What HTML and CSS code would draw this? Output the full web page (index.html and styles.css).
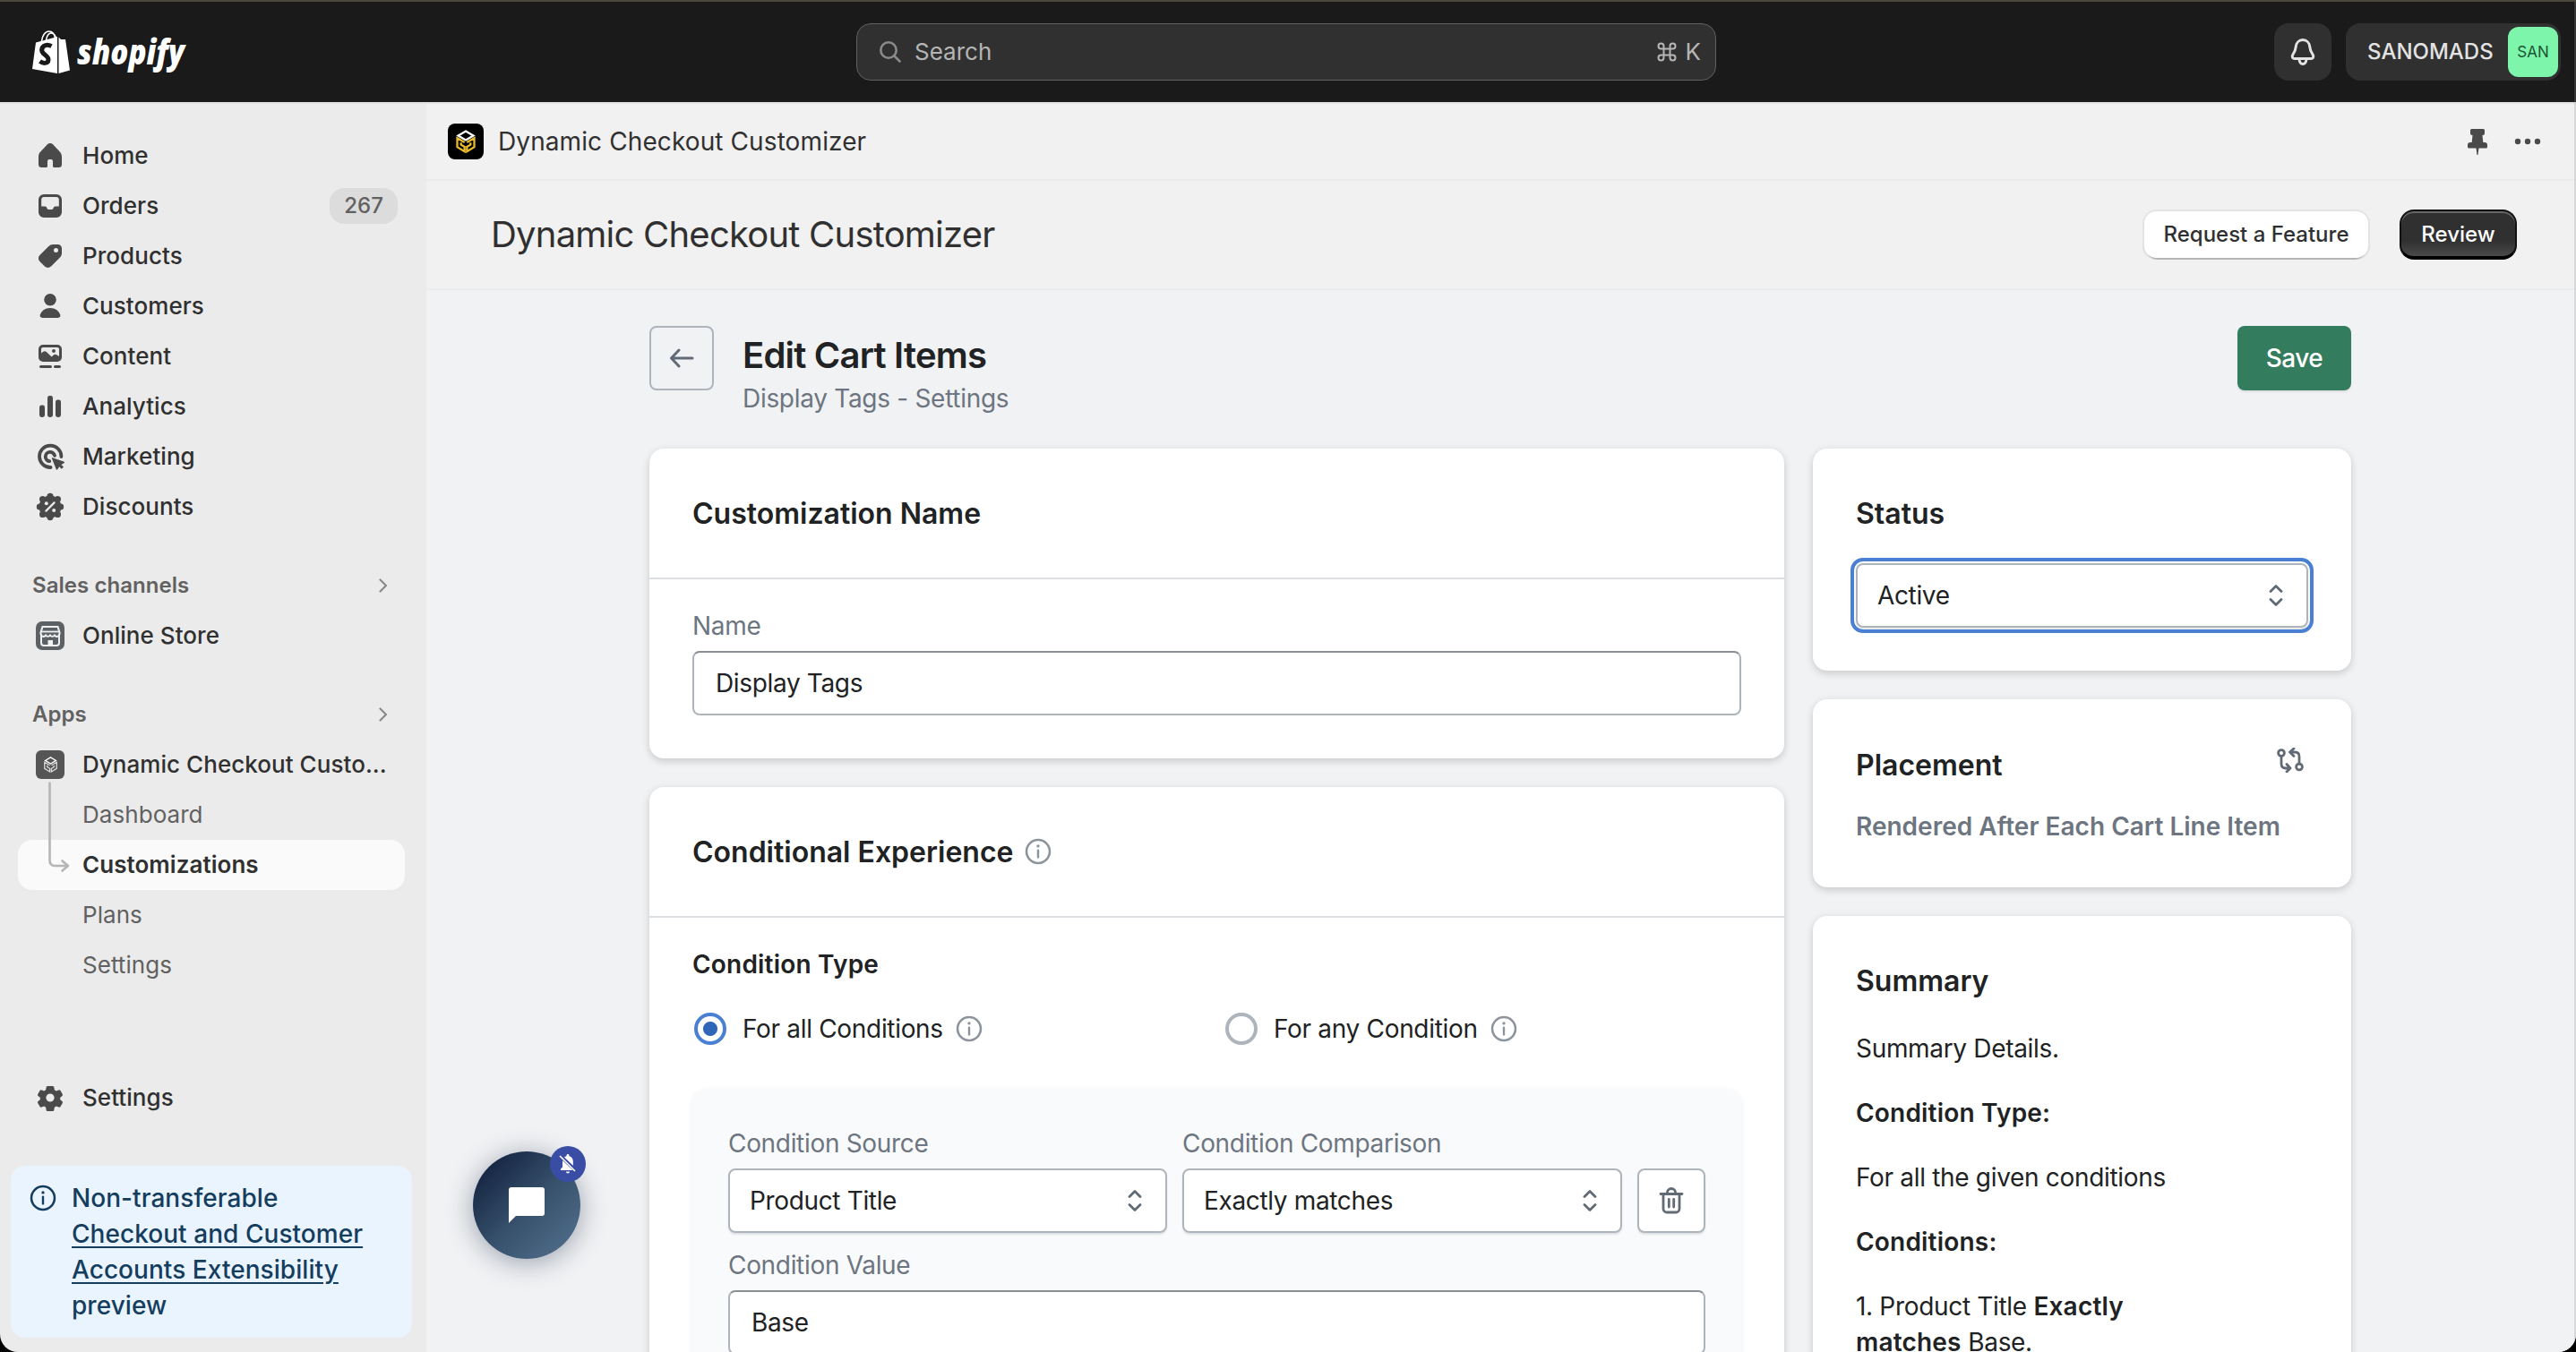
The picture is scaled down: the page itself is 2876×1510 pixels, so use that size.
FILE: index.html
```html
<!DOCTYPE html>
<html lang="en">
<head>
    <meta charset="UTF-8">
    <meta name="viewport" content="width=device-width, initial-scale=1.0">
    <title>Dynamic Checkout Customizer</title>
    <link rel="stylesheet" href="styles.css">
</head>
<body>

<!-- shared icons -->
<svg class="defs" width="0" height="0">
    <symbol id="info" viewBox="0 0 20 20">
        <circle cx="10" cy="10" r="8.1" fill="none" stroke="currentColor" stroke-width="1.6"/>
        <path d="M10 9.2v4.8" fill="none" stroke="currentColor" stroke-width="1.5" stroke-linecap="round"/>
        <circle cx="10" cy="6.2" r="1.05" fill="currentColor"/>
    </symbol>
    <symbol id="updown" viewBox="0 0 16 26">
        <path d="M2 8.5 8 2.5l6 6M2 17.5l6 6 6-6" fill="none" stroke="currentColor" stroke-width="2.8" stroke-linecap="round" stroke-linejoin="round"/>
    </symbol>
    <symbol id="chevron" viewBox="0 0 10 16">
        <path d="M1.5 1.5 8 8l-6.500 6.500" fill="none" stroke="currentColor" stroke-width="2.2" stroke-linecap="round" stroke-linejoin="round"/>
    </symbol>
    <symbol id="cube" viewBox="0 0 24 28">
        <path class="cube-top" d="M12 2.500 20.500 7.500 12 12.500 3.500 7.500Z" fill="none"/>
        <path class="cube-side" d="M10.700 15 2.500 10.200v10l8.200 5V20l-4-2.300v-2.500M13.300 15l8.200-4.800v10l-8.200 5V20l4-2.300v-2.500" fill="none"/>
    </symbol>
</svg>

<div class="frame">
    <header class="topbar">
        <div class="logo">
            <svg width="42" height="50" viewBox="0 0 42 50">
                <path d="M10.500 13C11 7 14.500 2 18.500 2S25 5 25.500 10M15.500 12C16 7 18.500 3.500 21.500 4S26 7 26.500 10" fill="none" stroke="#fff" stroke-width="1.6"/>
                <path d="M4 14.500 28 8v41L0 44Z" fill="#fff"/>
                <path d="M29.500 8.500 32 11h5l5 34.500L29.500 49Z" fill="#fff"/>
                <path d="M21.500 18.500C14.500 15 9.500 19.500 11 24.500c1.500 4 7.500 5 7 9.500-.5 4.500-6 4-9.500 1.500" fill="none" stroke="#1a1a1a" stroke-width="5"/>
            </svg>
            <svg width="126" height="58" viewBox="0 0 126 58">
                <text x="2" y="43" class="wordmark" textLength="120" lengthAdjust="spacingAndGlyphs">shopify</text>
            </svg>
        </div>
        <div class="search">
            <svg width="26" height="26" viewBox="0 0 26 26" fill="none" stroke="#8a8a8a" stroke-width="2.6" stroke-linecap="round"><circle cx="11" cy="11" r="8.7"/><path d="m17.500 17.500 6 6"/></svg>
            <span>Search</span>
            <span class="shortcut"><svg width="22" height="22" viewBox="0 0 22 22" fill="none" stroke="#b5b5b5" stroke-width="2"><path d="M7.500 7.500h7v7h-7zM7.500 7.500H4.500a3 3 0 1 1 3-3zM14.500 7.500V4.500a3 3 0 1 1 3 3zM14.500 14.500H17.500a3 3 0 1 1-3 3zM7.500 14.500v3a3 3 0 1 1-3-3z"/></svg>K</span>
        </div>
        <button class="bell">
            <svg width="40" height="40" viewBox="0 0 20 20" fill="none" stroke="#e3e3e3" stroke-width="1.5" stroke-linejoin="round"><path d="M10 3.300c-2.300 0-3.700 1.800-3.900 3.900-.2 2.100-.5 2.700-1.500 4-.9 1.200-.5 2.600.9 2.600h9c1.400 0 1.800-1.400.9-2.600-1-1.300-1.300-1.900-1.500-4-.2-2.100-1.600-3.900-3.900-3.900Z"/><path d="M8 14c.1 1.600.9 2.700 2 2.700s1.900-1.100 2-2.700"/></svg>
        </button>
        <div class="account">
            <span>SANOMADS</span>
            <div class="avatar">SAN</div>
        </div>
    </header>

    <div class="layout">
        <aside class="sidebar">
            <nav class="menu">
                <a href="#">
                    <svg viewBox="0 0 20 20"><path d="M8.344 3.692a2.250 2.250 0 0 1 3.312 0l3.854 4.190a3.750 3.750 0 0 1 .99 2.538v4.330a1.750 1.750 0 0 1-1.750 1.750h-2.500a.75.75 0 0 1-.75-.75v-2.750a1 1 0 0 0-1-1h-1a1 1 0 0 0-1 1v2.750a.75.75 0 0 1-.75.75h-2.500a1.750 1.750 0 0 1-1.750-1.750v-4.330c0-.94.353-1.846.99-2.539l3.854-4.189Z"/></svg>
                    Home
                </a>
                <a href="#">
                    <svg viewBox="0 0 20 20"><path fill-rule="evenodd" d="M6.500 3.500h7a3 3 0 0 1 3 3v7a3 3 0 0 1-3 3h-7a3 3 0 0 1-3-3v-7a3 3 0 0 1 3-3ZM6.700 5A1.600 1.600 0 0 0 5.100 6.600V10.200h1.900c.5 0 .8.200 1 .6l.3.600c.2.400.5.600 1 .6h1.400c.5 0 .8-.2 1-.6l.3-.6c.2-.4.5-.6 1-.6h1.900V6.600A1.600 1.600 0 0 0 13.300 5Z"/></svg>
                    Orders
                    <span class="count">267</span>
                </a>
                <a href="#">
                    <svg viewBox="0 0 20 20"><path fill-rule="evenodd" d="M11.600 3.500h2.650a2.250 2.250 0 0 1 2.250 2.250V8.400c0 .9-.36 1.770-1 2.400l-5 5a2.500 2.500 0 0 1-3.530 0l-2.770-2.770a2.500 2.500 0 0 1 0-3.530l5-5a3.400 3.400 0 0 1 2.400-1ZM13.250 8a1.250 1.250 0 1 0 0-2.500 1.250 1.250 0 0 0 0 2.500Z"/></svg>
                    Products
                </a>
                <a href="#">
                    <svg viewBox="0 0 20 20"><circle cx="10" cy="6.4" r="3.4"/><path d="M10 11c-2.800 0-4.800 1.500-5.600 3.800-.3.900.3 1.700 1.200 1.700h8.800c.9 0 1.500-.8 1.200-1.700C14.800 12.500 12.800 11 10 11Z"/></svg>
                    Customers
                </a>
                <a href="#">
                    <svg viewBox="0 0 20 20"><path fill-rule="evenodd" d="M6 3.500h8a2.500 2.500 0 0 1 2.500 2.500v4.500a2.500 2.500 0 0 1-2.500 2.500H6a2.500 2.500 0 0 1-2.500-2.500V6A2.500 2.500 0 0 1 6 3.500ZM6 5a1 1 0 0 0-1 1v2.300l1-.8c.6-.5 1.300-.5 1.900 0l2.900 2.800 1.100-1c.6-.5 1.300-.5 1.900 0L15 10V6a1 1 0 0 0-1-1ZM12 8a1 1 0 1 0 0-2 1 1 0 0 0 0 2Z"/><path d="M4.750 15.750h5.500M12.750 15.750h2.500" stroke="#4a4a4a" stroke-width="1.5" stroke-linecap="round"/></svg>
                    Content
                </a>
                <a href="#">
                    <svg viewBox="0 0 20 20"><rect x="4" y="9.3" width="3" height="6.7" rx="1.2"/><rect x="8.5" y="4" width="3" height="12" rx="1.2"/><rect x="13" y="6.3" width="3" height="9.7" rx="1.2"/></svg>
                    Analytics
                </a>
                <a href="#">
                    <svg viewBox="0 0 20 20"><path d="M10.300 16a6.100 6.100 0 1 1 5.900-6" fill="none" stroke="#4a4a4a" stroke-width="1.9" stroke-linecap="round"/><path d="M9.600 12.600A2.600 2.600 0 1 1 12.500 9.400" fill="none" stroke="#4a4a4a" stroke-width="1.9" stroke-linecap="round"/><path d="m11 10.500 6.600 2.200c.5.200.5.700.1.900l-1.500.9 1.300 1.300-1.100 1.100-1.300-1.300-.9 1.400c-.3.500-.8.400-.9-.1l-2.400-6Z"/></svg>
                    Marketing
                </a>
                <a href="#">
                    <svg viewBox="0 0 20 20"><circle cx="10" cy="10" r="6.2"/><circle cx="10" cy="4.2" r="1.8"/><circle cx="14.2" cy="5.8" r="1.8"/><circle cx="15.8" cy="10" r="1.8"/><circle cx="14.2" cy="14.2" r="1.8"/><circle cx="10" cy="15.8" r="1.8"/><circle cx="5.8" cy="14.2" r="1.8"/><circle cx="4.2" cy="10" r="1.8"/><circle cx="5.8" cy="5.8" r="1.8"/><path d="m7.700 12.300 4.600-4.600" stroke="#ebebeb" stroke-width="1.1" stroke-linecap="round"/><circle cx="7.9" cy="8.1" r="1" fill="#ebebeb"/><circle cx="12.1" cy="12" r="1" fill="#ebebeb"/></svg>
                    Discounts
                </a>
            </nav>

            <div class="section">Sales channels <svg width="10" height="16"><use href="#chevron"/></svg></div>
            <nav class="menu">
                <a href="#">
                    <svg viewBox="0 0 40 40"><rect x="4" y="4" width="32" height="32" rx="7" fill="#5c6166"/><path d="M10 18v10a3 3 0 0 0 3 3h14a3 3 0 0 0 3-3V18" fill="none" stroke="#f1f1f1" stroke-width="2"/><path d="M11.500 10h17l2 6.500v1.500a3 3 0 0 1-5.500 1.500 3 3 0 0 1-5 0 3 3 0 0 1-5 0A3 3 0 0 1 9.500 18v-1.500Z" fill="none" stroke="#f1f1f1" stroke-width="2"/><path d="M10 15.500h20" stroke="#f1f1f1" stroke-width="1.8"/><path d="M17.500 30v-5h5.500v5Z" fill="#f1f1f1"/></svg>
                    Online Store
                </a>
            </nav>

            <div class="section">Apps <svg width="10" height="16"><use href="#chevron"/></svg></div>
            <nav class="menu">
                <a href="#"><span class="app-tile"><svg width="17" height="20"><use href="#cube"/></svg></span><span class="app-name">Dynamic Checkout Custo...</span></a>
                <div class="submenu">
                    <svg class="branch" width="24" height="102" viewBox="0 0 24 102" fill="none" stroke="#b5b5b5" stroke-width="2.6" stroke-linecap="round" stroke-linejoin="round"><path d="M1.500 1.500V88q0 6 6 6H22M15.500 88.500l6.500 5.500-6.500 5.500"/></svg>
                    <a href="#">Dashboard</a>
                    <a href="#" class="active">Customizations</a>
                    <a href="#">Plans</a>
                    <a href="#">Settings</a>
                </div>
            </nav>

            <nav class="menu settings">
                <a href="#">
                    <svg viewBox="0 0 20 20"><path fill-rule="evenodd" d="M8.700 3.500h2.600c.5 0 .8.300.9.800l.2 1.300 1 .6 1.300-.5c.4-.2.900 0 1.100.4l1 1.800c.3.400.2.900-.2 1.200l-1 .8v1.200l1 .8c.4.300.5.800.2 1.200l-1 1.800c-.2.400-.7.600-1.100.4l-1.300-.5-1 .6-.2 1.300c-.1.500-.4.800-.9.800H8.700c-.5 0-.8-.3-.9-.8l-.2-1.300-1-.6-1.300.5c-.4.200-.9 0-1.100-.4l-1-1.800c-.3-.4-.2-.9.2-1.200l1-.8V9.900l-1-.8c-.4-.3-.5-.8-.2-1.200l1-1.800c.2-.4.700-.6 1.100-.4l1.300.5 1-.6.200-1.300c.1-.5.4-.8.900-.8ZM10 12.300a2.300 2.300 0 1 0 0-4.600 2.300 2.300 0 0 0 0 4.600Z"/></svg>
                    Settings
                </a>
            </nav>

            <div class="notice">
                <svg width="32" height="32"><use href="#info"/></svg>
                <p>Non-transferable<br><a href="#">Checkout and Customer<br>Accounts Extensibility</a><br>preview</p>
            </div>
        </aside>

        <main class="main">
            <div class="app-bar">
                <span class="app-icon"><svg width="24" height="28"><use href="#cube"/></svg></span>
                <span class="app-label">Dynamic Checkout Customizer</span>
                <svg class="pin" width="24" height="30" viewBox="0 0 24 30" fill="#4a4a4a"><path d="M5.500 0h13a1.500 1.500 0 0 1 1.500 1.500V5a2 2 0 0 1-2 2h-.5l.8 8H20a3 3 0 0 1 3 3v2a1.500 1.500 0 0 1-1.500 1.500h-8L12.500 29h-1l-1-7.500h-8A1.500 1.500 0 0 1 1 20v-2a3 3 0 0 1 3-3h1.700l.8-8H6a2 2 0 0 1-2-2V1.500A1.500 1.500 0 0 1 5.500 0Z"/></svg>
                <svg width="30" height="8" viewBox="0 0 30 8" fill="#4a4a4a"><circle cx="4" cy="4" r="3.2"/><circle cx="15" cy="4" r="3.2"/><circle cx="26" cy="4" r="3.2"/></svg>
            </div>

            <div class="title-bar">
                <h1>Dynamic Checkout Customizer</h1>
                <button class="btn btn-light">Request a Feature</button>
                <button class="btn btn-dark">Review</button>
            </div>

            <div class="page">
                <div class="page-header">
                    <button class="back">
                        <svg width="28" height="24" viewBox="0 0 28 24" fill="none" stroke="#616a75" stroke-width="3" stroke-linecap="round" stroke-linejoin="round"><path d="M26 12H3M11 3 2.500 12l8.500 9"/></svg>
                    </button>
                    <div class="page-title">
                        <h2>Edit Cart Items</h2>
                        <p>Display Tags - Settings</p>
                    </div>
                    <button class="save">Save</button>
                </div>

                <div class="columns">
                    <div class="column">
                        <section class="card">
                            <div class="card-header"><h3>Customization Name</h3></div>
                            <div class="card-body">
                                <label for="name">Name</label>
                                <input type="text" id="name" value="Display Tags">
                            </div>
                        </section>

                        <section class="card">
                            <div class="card-header">
                                <h3>Conditional Experience</h3>
                                <svg class="info" width="32" height="32"><use href="#info"/></svg>
                            </div>
                            <div class="card-body conditions">
                                <h4>Condition Type</h4>
                                <div class="radios">
                                    <label><input type="radio" name="type" checked>For all Conditions <svg class="info" width="32" height="32"><use href="#info"/></svg></label>
                                    <label><input type="radio" name="type">For any Condition <svg class="info" width="32" height="32"><use href="#info"/></svg></label>
                                </div>

                                <div class="condition">
                                    <div class="condition-row">
                                        <div class="field">
                                            <label for="source">Condition Source</label>
                                            <div class="select">
                                                <select id="source"><option>Product Title</option></select>
                                                <svg width="16" height="26"><use href="#updown"/></svg>
                                            </div>
                                        </div>
                                        <div class="field">
                                            <label for="comparison">Condition Comparison</label>
                                            <div class="select">
                                                <select id="comparison"><option>Exactly matches</option></select>
                                                <svg width="16" height="26"><use href="#updown"/></svg>
                                            </div>
                                        </div>
                                        <button class="trash">
                                            <svg width="28" height="30" viewBox="0 0 28 30" fill="none" stroke="#616a75" stroke-width="2.8" stroke-linecap="round"><path d="M2 7.500h24M9.500 7V5.500a4.500 4 0 0 1 9 0V7M5 8v16a4 4 0 0 0 4 4h10a4 4 0 0 0 4-4V8M11.300 13.500v8.500M16.700 13.500v8.500"/></svg>
                                        </button>
                                    </div>
                                    <label for="value">Condition Value</label>
                                    <input type="text" id="value" value="Base">
                                </div>
                            </div>
                        </section>
                    </div>

                    <div class="column">
                        <section class="card side status">
                            <h3>Status</h3>
                            <div class="select focused">
                                <select><option>Active</option></select>
                                <svg width="16" height="26"><use href="#updown"/></svg>
                            </div>
                        </section>

                        <section class="card side placement">
                            <div class="side-title">
                                <h3>Placement</h3>
                                <svg width="30" height="28" viewBox="0 0 30 28" fill="none" stroke="#616a75" stroke-width="2.8" stroke-linecap="round" stroke-linejoin="round"><circle cx="5" cy="6" r="3.4"/><path d="M5 9.500V18q0 5 5 5h4M11 18.500l4 4.500-4 4M25 18V10q0-5-5-5h-4M19 1l-4.500 4L19 9.500"/><circle cx="25" cy="21.5" r="3.4"/></svg>
                            </div>
                            <p>Rendered After Each Cart Line Item</p>
                        </section>

                        <section class="card side summary">
                            <h3>Summary</h3>
                            <p>Summary Details.</p>
                            <p><b>Condition Type:</b></p>
                            <p>For all the given conditions</p>
                            <p><b>Conditions:</b></p>
                            <p>1. Product Title <b>Exactly<br>matches</b> Base.</p>
                        </section>
                    </div>
                </div>
            </div>
        </main>
    </div>

    <button class="chat">
        <svg width="40" height="40" viewBox="0 0 40 40" fill="#fff"><path d="M3 0h34a3 3 0 0 1 3 3v26a3 3 0 0 1-3 3H8l-8 8V3a3 3 0 0 1 3-3Z"/></svg>
        <span class="muted">
            <svg width="20" height="22" viewBox="0 0 20 22" fill="#fff"><path d="M10 0c.9 0 1.500.7 1.500 1.500v.7c2.700.7 4.300 3 4.300 5.900V14l2 2.500V18H2v-1.500l2-2V8c0-2.900 1.800-5.200 4.500-5.800v-.7C8.500.7 9.100 0 10 0ZM8 19.500h4a2 2 0 0 1-4 0Z"/><path d="m1 1.500 18 17" stroke="#3a4da5" stroke-width="4"/><path d="m1 2 17 17" stroke="#fff" stroke-width="1.6"/></svg>
        </span>
    </button>
</div>

</body>
</html>
```
FILE: styles.css
```css
* {
    box-sizing: border-box;
}

html {
    background: #000;
}

body {
    margin: 0;
    height: 1510px;
    overflow: hidden;
    font-family: Inter, "Liberation Sans", sans-serif;
    font-size: 28px;
    line-height: 40px;
    color: #202223;
}

h1, h2, h3, h4, p {
    margin: 0;
}

a {
    color: inherit;
    text-decoration: none;
}

button {
    padding: 0;
    border: 0;
    font-family: inherit;
    cursor: pointer;
}

.defs {
    display: none;
}

.frame {
    position: relative;
    display: flex;
    flex-direction: column;
    height: 1510px;
    border-top: 2px solid #4a473c;
    border-radius: 0 0 20px 20px;
    overflow: hidden;
    background: #ebebeb;
}

/* thin window edge */
.frame::after {
    content: "";
    position: absolute;
    top: 0;
    right: 0;
    bottom: 0;
    width: 2px;
    background: rgba(140, 140, 140, 0.25);
}

/* top bar */
.topbar {
    display: flex;
    align-items: center;
    flex: none;
    height: 112px;
    padding: 0 17px 0 36px;
    background: #1a1a1a;
    color: #e3e3e3;
    font-size: 26px;
}

.logo {
    display: flex;
    align-items: center;
    gap: 6px;
    width: 920px;
}

.wordmark {
    font-family: "Open Sans", sans-serif;
    font-size: 38px;
    font-weight: 800;
    font-style: italic;
    fill: #fff;
}

.search {
    display: flex;
    align-items: center;
    width: 960px;
    height: 64px;
    padding: 0 16px 0 24px;
    border: 1px solid #616161;
    border-radius: 16px;
    background: #303030;
    color: #b5b5b5;
}

.search > svg {
    margin-right: 14px;
}

.shortcut {
    display: flex;
    align-items: center;
    gap: 10px;
    margin-left: auto;
}

.bell {
    display: flex;
    align-items: center;
    justify-content: center;
    width: 64px;
    height: 64px;
    margin-left: auto;
    margin-right: 16px;
    border-radius: 16px;
    background: #303030;
}

.account {
    display: flex;
    align-items: center;
    justify-content: space-between;
    width: 240px;
    height: 64px;
    padding: 0 3px 0 24px;
    border-radius: 16px;
    background: #303030;
    font-size: 24px;
    font-weight: 500;
}

.avatar {
    width: 56px;
    height: 56px;
    border-radius: 12px;
    background: #7df5aa;
    color: #1c5636;
    font-size: 17px;
    font-weight: 400;
    line-height: 56px;
    text-align: center;
}

.layout {
    display: flex;
    flex: 1;
    min-height: 0;
}

/* sidebar */
.sidebar {
    display: flex;
    flex-direction: column;
    flex: none;
    width: 476px;
    padding: 30px 16px 16px 12px;
    border-top: 2px solid #e3e3e3;
    font-size: 26px;
    font-weight: 500;
    letter-spacing: 0.05px;
    color: #303030;
}

.menu {
    padding: 0 8px;
}

.menu a {
    display: flex;
    align-items: center;
    height: 56px;
    padding: 0 8px 0 16px;
}

.menu a > svg {
    width: 40px;
    height: 40px;
    margin-right: 16px;
    fill: #4a4a4a;
}

.count {
    margin-left: auto;
    padding: 0 16px;
    border-radius: 16px;
    background: #dcdcdc;
    color: #616161;
    font-size: 24px;
}

.section {
    display: flex;
    align-items: center;
    justify-content: space-between;
    height: 56px;
    margin-top: 32px;
    padding: 0 27px 0 24px;
    color: #616161;
    font-size: 24px;
    font-weight: 600;
}

.section svg {
    color: #8a8a8a;
}

.app-tile {
    display: flex;
    align-items: center;
    justify-content: center;
    flex: none;
    width: 32px;
    height: 32px;
    margin: 0 20px 0 4px;
    border-radius: 6px;
    background: #555;
    stroke: #ddd;
    stroke-width: 1.8px;
}

.app-name {
    white-space: nowrap;
}

.submenu {
    position: relative;
}

.submenu a {
    padding-left: 72px;
    color: #616161;
    font-weight: 400;
}

.submenu a.active {
    border-radius: 16px;
    background: #fafafa;
    color: #303030;
    font-weight: 600;
}

.branch {
    position: absolute;
    left: 34px;
    top: -9px;
}

.menu.settings {
    margin-top: auto;
    margin-bottom: 48px;
}

.notice {
    display: flex;
    gap: 16px;
    height: 192px;
    padding: 16px 20px;
    border-radius: 16px;
    background: #eaf4ff;
    color: #143d5e;
    font-size: 28px;
}

.notice svg {
    flex: none;
    margin-top: 4px;
}

.notice a {
    text-decoration: underline;
    text-decoration-thickness: 2px;
    text-underline-offset: 4px;
}

/* main area */
.main {
    flex: 1;
    background: #f1f2f4;
}

.app-bar {
    display: flex;
    align-items: center;
    height: 88px;
    padding: 2px 39px 2px 24px;
    border-top: 2px solid #e3e3e3;
    border-bottom: 2px solid #ebebeb;
    background: #f1f1f1;
    color: #303030;
}

.app-icon {
    display: flex;
    align-items: center;
    justify-content: center;
    width: 40px;
    height: 40px;
    margin-right: 16px;
    border-radius: 8px;
    background: #000;
    stroke: #e9bc2f;
    stroke-width: 2.3px;
}

.app-label {
    letter-spacing: 0.1px;
}

.cube-top {
    stroke: #fff;
}

.pin {
    margin-top: 2px;
    margin-left: auto;
    margin-right: 29px;
}

.title-bar {
    display: flex;
    align-items: center;
    height: 122px;
    padding: 0 66px 0 72px;
    border-bottom: 2px solid #ebebeb;
    background: #f1f1f1;
}

.title-bar h1 {
    margin-right: auto;
    color: #303030;
    font-size: 40px;
    font-weight: 400;
    letter-spacing: -0.78px;
}

.btn {
    height: 56px;
    border-radius: 16px;
    font-size: 24px;
    font-weight: 500;
}

.btn-light {
    width: 254px;
    margin-right: 33px;
    padding-bottom: 2px;
    background: #fff;
    box-shadow: inset 0 2px 0 #e3e3e3, inset 2px 0 0 #e3e3e3, inset -2px 0 0 #e3e3e3, inset 0 -2px 0 #b5b5b5;
    color: #303030;
}

.btn-dark {
    width: 131px;
    border: 2px solid #111;
    border-bottom: 4px solid #000;
    background: linear-gradient(#303030 65%, #4a4a4a);
    box-shadow: inset 0 2px 0 #666;
    color: #fff;
}

.page {
    width: 1900px;
    margin-left: 249px;
    padding-top: 40px;
}

.page-header {
    display: flex;
    align-items: flex-start;
    height: 137px;
}

.back {
    width: 72px;
    height: 72px;
    border: 2px solid #aeb4bb;
    border-radius: 8px;
    background: none;
}

.back svg, .trash svg {
    display: block;
    margin: auto;
}

.page-title {
    margin-left: 32px;
    margin-right: auto;
    padding-top: 5px;
}

.page-title h2 {
    font-size: 40px;
    font-weight: 600;
    line-height: 56px;
    letter-spacing: -0.8px;
}

.page-title p {
    color: #6d7580;
    letter-spacing: -0.3px;
}

.save {
    width: 127px;
    height: 72px;
    border-radius: 8px;
    background: #347c5e;
    box-shadow: 0 2px 2px rgba(0, 0, 0, 0.08);
    color: #fff;
    font-size: 28px;
    font-weight: 500;
    letter-spacing: -0.5px;
}

.columns {
    display: grid;
    grid-template-columns: 1267px 601px;
    gap: 32px;
    align-items: start;
}

.column {
    display: flex;
    flex-direction: column;
    gap: 32px;
}

.card {
    border-radius: 16px;
    background: #fff;
    box-shadow: 0 0 10px rgba(23, 24, 24, 0.06), 0 4px 8px rgba(0, 0, 0, 0.12);
    letter-spacing: -0.32px;
}

.card h3 {
    font-size: 32px;
    font-weight: 600;
    letter-spacing: 0;
}

.card h4, .card b {
    font-weight: 600;
    letter-spacing: 0.2px;
}

.card label {
    color: #6d7580;
}

.card-header {
    display: flex;
    align-items: center;
    gap: 12px;
    height: 146px;
    padding: 2px 48px 0;
    border-bottom: 2px solid #dedfe5;
}

.card-header .info {
    margin-bottom: 2px;
}

.card-body {
    padding: 32px 48px 48px;
}

.card-body > label {
    display: block;
    margin-bottom: 8px;
}

.info {
    color: #8c939c;
}

input[type="text"], select {
    display: block;
    width: 100%;
    height: 72px;
    padding: 0 24px;
    border: 2px solid #aeb4bb;
    border-radius: 8px;
    background: #fff;
    color: #202223;
    font-family: inherit;
    font-size: 28px;
    letter-spacing: -0.35px;
    appearance: none;
    outline: none;
}

input[type="text"] {
    border-top-color: #898f94;
}

select {
    padding: 0 22px;
}

.select {
    position: relative;
    border-radius: 8px;
    box-shadow: 0 2px 2px rgba(0, 0, 0, 0.1);
}

.select svg {
    position: absolute;
    top: 23px;
    right: 28px;
    color: #616a75;
}

.select.focused {
    outline: 4px solid #4a80d4;
    outline-offset: 2px;
}

.conditions h4 {
    font-size: 28px;
}

.radios {
    display: grid;
    grid-template-columns: 593px 1fr;
    margin-top: 32px;
    margin-bottom: 47px;
}

.card .radios label {
    display: flex;
    align-items: center;
    color: #202223;
}

.radios .info {
    margin-left: 13px;
}

.radios input {
    width: 36px;
    height: 36px;
    margin: 0 18px 0 2px;
    border: 4px solid #aeb4bb;
    border-radius: 50%;
    background: #fff;
    appearance: none;
}

.radios input:checked {
    border-color: #4a80d4;
    background: radial-gradient(circle, #2f66b8 7.5px, #fff 8.5px);
}

.condition {
    height: 400px;
    padding: 41px 40px;
    border-radius: 16px;
    background: #f9fafc;
    box-shadow: 0 2px 6px rgba(23, 24, 24, 0.07);
}

.condition-row {
    display: grid;
    grid-template-columns: 490px 491px 76px;
    gap: 17px;
    align-items: end;
    margin-bottom: 16px;
}

.condition label {
    display: block;
    margin-bottom: 8px;
}

.trash {
    height: 72px;
    border: 2px solid #aeb4bb;
    border-radius: 8px;
    background: #fff;
    box-shadow: 0 2px 2px rgba(0, 0, 0, 0.1);
}

.side {
    padding: 53px 48px 48px;
}

.status {
    height: 248px;
}

.status .select {
    margin-top: 35px;
}

.placement {
    height: 210px;
    padding-top: 54px;
}

.side-title {
    display: flex;
    justify-content: space-between;
    padding-right: 5px;
}

.placement p {
    margin-top: 28px;
    color: #6d7580;
    font-weight: 600;
    letter-spacing: 0;
}

.summary {
    min-height: 560px;
}

.summary p {
    margin-top: 32px;
}

.summary h3 + p {
    margin-top: 35px;
}

/* chat button */
.chat {
    position: absolute;
    left: 528px;
    top: 1284px;
    display: flex;
    align-items: center;
    justify-content: center;
    width: 120px;
    height: 120px;
    border-radius: 50%;
    background: linear-gradient(135deg, #132340 10%, #39536e 55%, #54728f);
    box-shadow: 0 4px 30px rgba(19, 35, 64, 0.4);
}

.muted {
    position: absolute;
    top: -6px;
    right: -6px;
    display: flex;
    align-items: center;
    justify-content: center;
    width: 40px;
    height: 40px;
    border-radius: 50%;
    background: #3a4da5;
}
```
